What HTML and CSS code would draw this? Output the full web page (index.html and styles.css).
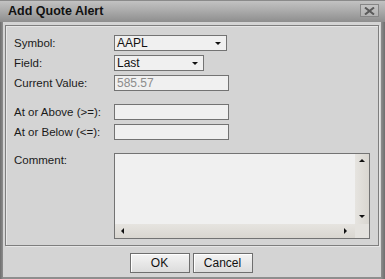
FILE: index.html
```html
<!DOCTYPE html>
<html>
<head>
<meta charset="utf-8">
<link rel="stylesheet" href="styles.css">
</head>
<body>
<div class="window">
  <div class="titlebar">
    <span class="title">Add Quote Alert</span>
    <span class="close"><svg width="11" height="8" viewBox="0 0 11 8"><path d="M1 0.5 L10 7.5 M10 0.5 L1 7.5" stroke="#5a5a5a" stroke-width="2"/></svg></span>
  </div>
  <div class="body">
    <div class="panel">
      <div class="row">
        <span class="label">Symbol:</span>
        <div class="select w-symbol"><span class="val">AAPL</span><span class="caret"></span></div>
      </div>
      <div class="row">
        <span class="label">Field:</span>
        <div class="select w-field"><span class="val">Last</span><span class="caret"></span></div>
      </div>
      <div class="row">
        <span class="label">Current Value:</span>
        <div class="input w-input disabled"><span class="val">585.57</span></div>
      </div>
      <div class="row gap-top">
        <span class="label">At or Above (&gt;=):</span>
        <div class="input w-input"></div>
      </div>
      <div class="row">
        <span class="label">At or Below (&lt;=):</span>
        <div class="input w-input"></div>
      </div>
      <div class="row gap-top comment-row">
        <span class="label">Comment:</span>
        <div class="textarea">
          <div class="ta-main">
            <div class="ta-text"></div>
            <div class="vscroll">
              <span class="arr up"></span>
              <span class="arr down"></span>
            </div>
          </div>
          <div class="hscroll">
            <span class="arr left"></span>
            <span class="arr right"></span>
            <span class="corner"></span>
          </div>
        </div>
      </div>
    </div>
    <div class="buttons">
      <div class="btn">OK</div>
      <div class="btn">Cancel</div>
    </div>
  </div>
</div>
</body>
</html>
```

FILE: styles.css
```css
html, body {
  margin: 0;
  padding: 0;
  width: 385px;
  height: 279px;
  overflow: hidden;
  font-family: "Liberation Sans", Arial, sans-serif;
  font-size: 11.5px;
  color: #1a1a1a;
}

.window {
  width: 385px;
  height: 279px;
  box-sizing: border-box;
  background: linear-gradient(to right, #6e6e6e 0, #8e8e8e 3px, #8e8e8e 381px, #6e6e6e 385px);
  display: flex;
  flex-direction: column;
  padding: 0 4px 2px 3px;
}

.titlebar {
  height: 22px;
  margin: 0 -4px 0 -3px;
  background: linear-gradient(to bottom, #c2c2c2 0%, #aeaeae 40%, #8e8e8e 100%);
  border-top: 1px solid #8a8a8a;
  box-sizing: border-box;
  display: flex;
  align-items: center;
  justify-content: space-between;
  padding: 0 6px 1px 8px;
}

.title {
  font-weight: bold;
  font-size: 12.5px;
  color: #111;
}

.close {
  width: 19px;
  height: 13px;
  box-sizing: border-box;
  border: 1px solid #868686;
  background: linear-gradient(to bottom, #c4c4c4, #b2b2b2);
  display: flex;
  align-items: center;
  justify-content: center;
  margin-top: -1px;
}

.body {
  flex: 1;
  background: #d4d4d4;
  padding: 3px 2px 0 2px;
  display: flex;
  flex-direction: column;
}

.panel {
  height: 221px;
  box-sizing: border-box;
  border: 1px solid #7e7e7e;
  box-shadow: inset 1px 1px 0 #e6e6e6, 1px 1px 0 #e6e6e6;
  padding: 9px 8px 0 8px;
  display: flex;
  flex-direction: column;
  gap: 4px;
}

.row {
  display: flex;
  align-items: center;
  height: 16px;
}

.row.gap-top {
  margin-top: 9px;
}

.label {
  width: 100px;
  flex: none;
  white-space: nowrap;
}

.select, .input {
  height: 16px;
  box-sizing: border-box;
  border: 1px solid #737373;
  background: #f0f0f0;
  display: flex;
  align-items: center;
  padding-left: 2px;
  justify-content: space-between;
}

.w-symbol { width: 113px; }
.w-field { width: 90px; }
.w-input { width: 115px; }

.val {
  font-size: 12px;
  color: #111;
}

.disabled .val {
  color: #8c8c8c;
}

.caret {
  width: 0;
  height: 0;
  border-left: 3px solid transparent;
  border-right: 3px solid transparent;
  border-top: 3px solid #111;
  margin-right: 5px;
}

.comment-row {
  height: 86px;
  align-items: flex-start;
}

.comment-row .label {
  padding-top: 1px;
}

.textarea {
  width: 256px;
  height: 86px;
  box-sizing: border-box;
  border: 1px solid #737373;
  background: #f0f0f0;
  display: flex;
  flex-direction: column;
}

.ta-main {
  flex: 1;
  display: flex;
}

.ta-text {
  flex: 1;
}

.vscroll {
  width: 14px;
  background: linear-gradient(to right, #e6e4e0, #d9d6d0);
  display: flex;
  flex-direction: column;
  justify-content: space-between;
  align-items: center;
  padding: 5px 0 6px;
  box-sizing: border-box;
}

.hscroll {
  height: 14px;
  background: linear-gradient(to bottom, #e6e4e0, #d9d6d0);
  display: flex;
  align-items: center;
  padding-left: 6px;
  box-sizing: border-box;
}

.corner {
  width: 14px;
  height: 14px;
  background: #e4e2de;
}

.arr {
  width: 0;
  height: 0;
  display: block;
}

.arr.up {
  border-left: 3px solid transparent;
  border-right: 3px solid transparent;
  border-bottom: 3px solid #111;
}

.arr.down {
  border-left: 3px solid transparent;
  border-right: 3px solid transparent;
  border-top: 3px solid #111;
}

.arr.left {
  border-top: 3px solid transparent;
  border-bottom: 3px solid transparent;
  border-right: 3px solid #111;
}

.arr.right {
  border-top: 3px solid transparent;
  border-bottom: 3px solid transparent;
  border-left: 3px solid #111;
  margin-left: auto;
  margin-right: 8px;
}

.buttons {
  display: flex;
  justify-content: center;
  gap: 3px;
  margin-top: 7px;
  padding-right: 2px;
}

.btn {
  width: 60px;
  height: 20px;
  box-sizing: border-box;
  border: 1px solid #6e6e6e;
  background: linear-gradient(to bottom, #f4f4f4, #dcdcdc);
  box-shadow: inset 1px 1px 0 #ffffff;
  display: flex;
  align-items: center;
  justify-content: center;
  font-size: 12px;
  color: #111;
}
```
